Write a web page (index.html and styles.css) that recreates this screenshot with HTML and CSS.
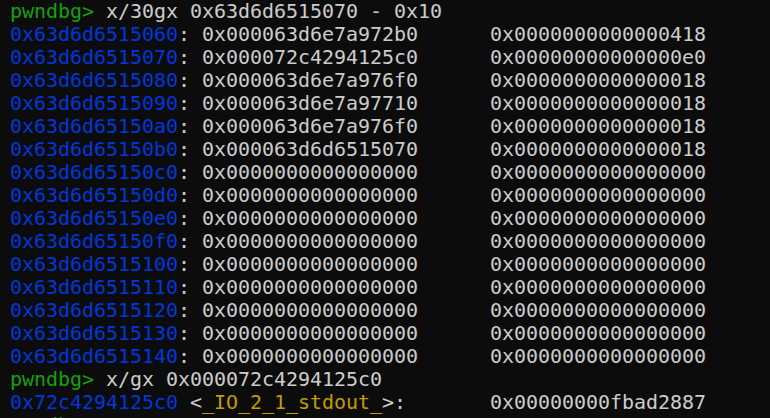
FILE: index.html
```html
<!DOCTYPE html>
<html lang="en">
<head>
  <meta charset="UTF-8">
  <meta name="viewport" content="width=device-width, initial-scale=1.0">
  <title>pwndbg</title>
  <link rel="stylesheet" href="styles.css">
</head>
<body>

  <!-- Terminal -->
  <pre class="term"><span class="g">pwndbg&gt;</span> x/30gx 0x63d6d6515070 - 0x10
<span class="b">0x63d6d6515060</span>: 0x000063d6e7a972b0      0x0000000000000418
<span class="b">0x63d6d6515070</span>: 0x000072c4294125c0      0x00000000000000e0
<span class="b">0x63d6d6515080</span>: 0x000063d6e7a976f0      0x0000000000000018
<span class="b">0x63d6d6515090</span>: 0x000063d6e7a97710      0x0000000000000018
<span class="b">0x63d6d65150a0</span>: 0x000063d6e7a976f0      0x0000000000000018
<span class="b">0x63d6d65150b0</span>: 0x000063d6d6515070      0x0000000000000018
<span class="b">0x63d6d65150c0</span>: 0x0000000000000000      0x0000000000000000
<span class="b">0x63d6d65150d0</span>: 0x0000000000000000      0x0000000000000000
<span class="b">0x63d6d65150e0</span>: 0x0000000000000000      0x0000000000000000
<span class="b">0x63d6d65150f0</span>: 0x0000000000000000      0x0000000000000000
<span class="b">0x63d6d6515100</span>: 0x0000000000000000      0x0000000000000000
<span class="b">0x63d6d6515110</span>: 0x0000000000000000      0x0000000000000000
<span class="b">0x63d6d6515120</span>: 0x0000000000000000      0x0000000000000000
<span class="b">0x63d6d6515130</span>: 0x0000000000000000      0x0000000000000000
<span class="b">0x63d6d6515140</span>: 0x0000000000000000      0x0000000000000000
<span class="g">pwndbg&gt;</span> x/gx 0x000072c4294125c0
<span class="b">0x72c4294125c0</span> &lt;<span class="y">_IO_2_1_stdout_</span>&gt;:       0x00000000fbad2887
<span class="g">pwndbg&gt;</span> </pre>

</body>
</html>
```

FILE: styles.css
```css
* { margin: 0; padding: 0; box-sizing: border-box; }
html, body {
  height: 100%;
  background: #0c0c0c;
  overflow: hidden;
}
.term {
  padding: 0 10px;
  color: #cccccc;
  font-family: 'DejaVu Sans Mono', monospace;
  font-size: 20px;
  line-height: 23px;
  letter-spacing: -0.04px;
  white-space: pre;
}
.g { color: #13a10e; }
.b { color: #0037da; }
.y { color: #c19c00; }
```
